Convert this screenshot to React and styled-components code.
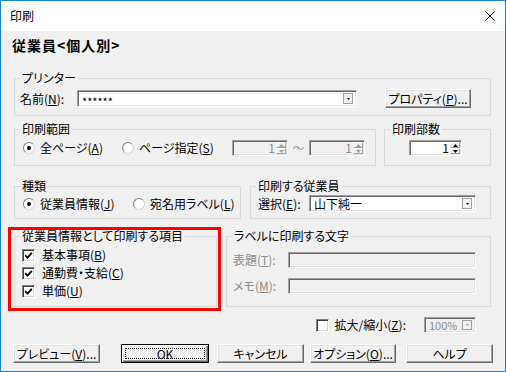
import React from 'react';
import styled, { createGlobalStyle } from 'styled-components';

const GlobalStyle = createGlobalStyle`
  html, body {
    margin: 0;
    padding: 0;
    background: #fff;
  }
  body {
    font-family: 'Noto Sans CJK JP', 'Noto Sans', sans-serif;
    font-size: 12px;
    color: #000;
  }
`;

const Window = styled.div`
  width: 506px;
  height: 372px;
  box-sizing: border-box;
  border: 1px solid #1883d7;
  background: #f0f0f0;
  display: flex;
  flex-direction: column;
  font-feature-settings: 'palt' 1;
  line-height: 14px;
`;

const TitleBar = styled.div`
  height: 30px;
  flex: none;
  background: #fff;
  display: flex;
  align-items: center;
  justify-content: space-between;
  padding: 0 10px 0 9px;
`;

const Main = styled.div`
  display: flex;
  flex-direction: column;
  padding: 0 14px 0 13px;
`;

const Heading = styled.div`
  margin: 5px 0 0 -2px;
  font-size: 14px;
  font-weight: bold;
  line-height: 18px;
  letter-spacing: 1px;
`;

const Row = styled.div`
  display: flex;
  align-items: flex-start;
  margin-top: ${p => p.$mt || 0}px;
  gap: ${p => p.$gap || 0}px;
`;

const Group = styled.fieldset`
  box-sizing: border-box;
  width: ${p => p.$w}px;
  min-width: 0;
  margin: ${p => p.$mt || 0}px 0 0;
  border: 1px solid #d9d9d9;
  padding: ${p => p.$pt}px 0 ${p => p.$pb}px 5px;
`;

const Legend = styled.legend`
  padding: 0 2px;
  font-size: 12px;
  line-height: 12px;
`;

const Line = styled.div`
  display: flex;
  align-items: center;
  height: ${p => p.$h}px;
  padding-left: ${p => p.$pl || 0}px;
  margin-top: ${p => p.$mt || 0}px;
`;

const Label = styled.span`
  flex: none;
  width: ${p => (p.$w ? `${p.$w}px` : 'auto')};
  color: ${p => (p.$dim ? '#8c8c8c' : '#000')};
  white-space: nowrap;
`;

const U = styled.span`
  text-decoration: underline;
  text-underline-offset: 1px;
`;

const Field = styled.div`
  box-sizing: border-box;
  flex: none;
  width: ${p => p.$w}px;
  height: ${p => p.$h}px;
  margin-left: ${p => p.$ml || 0}px;
  display: flex;
  align-items: center;
  padding-left: 4px;
  background: ${p => (p.$off ? '#f0f0f0' : '#fff')};
  color: ${p => (p.$off ? '#8c8c8c' : '#000')};
  border: 1px solid;
  border-color: #a0a0a0 #fff #fff #a0a0a0;
  box-shadow: inset 1px 1px 0 #696969, inset -1px -1px 0 #e3e3e3;
`;

const FieldText = styled.span`
  flex: 1;
  min-width: 0;
  line-height: 12px;
  font-size: ${p => p.$size || 12}px;
  padding-top: ${p => p.$shift || 0}px;
  text-align: ${p => (p.$right ? 'right' : 'left')};
  white-space: nowrap;
`;

const DropButton = styled.span`
  box-sizing: border-box;
  flex: none;
  width: 10px;
  height: ${p => p.$h}px;
  margin: 0 3px 0 2px;
  display: flex;
  align-items: center;
  justify-content: center;
  background: #f0f0f0;
  border: 1px solid #a0a0a0;
`;

const SpinButtons = styled.span`
  flex: none;
  width: 10px;
  height: 100%;
  margin-left: 1px;
  margin-right: 1px;
  display: flex;
  flex-direction: column;
  padding: 1px 0;
  box-sizing: border-box;
`;

const SpinHalf = styled.span`
  flex: 1;
  box-sizing: border-box;
  display: flex;
  align-items: center;
  justify-content: center;
  background: #f0f0f0;
  border: 1px solid;
  border-color: #fff #a0a0a0 #a0a0a0 #fff;
`;

const RadioItem = styled.label`
  display: flex;
  align-items: center;
  gap: 5px;
  flex: none;
  width: ${p => (p.$w ? `${p.$w}px` : 'auto')};
  white-space: nowrap;
`;

const RadioDot = styled.span`
  box-sizing: border-box;
  width: 12px;
  height: 12px;
  flex: none;
  border-radius: 50%;
  border: 1px solid;
  border-color: #808080 #d4d4d4 #d4d4d4 #808080;
  background: #fff;
  display: flex;
  align-items: center;
  justify-content: center;
  &::after {
    content: '';
    width: 4px;
    height: 4px;
    border-radius: 50%;
    background: ${p => (p.$on ? '#000' : 'transparent')};
  }
`;

const CheckItem = styled.label`
  display: flex;
  align-items: center;
  gap: ${p => p.$gap || 7}px;
  height: ${p => p.$h || 18}px;
  white-space: nowrap;
`;

const CheckBox = styled.span`
  box-sizing: border-box;
  width: 13px;
  height: 13px;
  flex: none;
  background: #fff;
  border: 1px solid;
  border-color: #808080 #fff #fff #808080;
  box-shadow: inset 1px 1px 0 #404040, inset -1px -1px 0 #d4d4d4;
  display: flex;
  align-items: center;
  justify-content: center;
`;

const Tilde = styled.span`
  flex: none;
  width: 21px;
  text-align: center;
  color: #a0a0a0;
`;

const RedFrame = styled.div`
  box-sizing: border-box;
  width: 213px;
  margin-left: -6px;
  border: 3px solid #ff0000;
  padding: 0 1px 1px 3px;
`;

const ZoomRow = styled.div`
  display: flex;
  align-items: center;
  justify-content: flex-end;
  height: 16px;
  margin-top: 6px;
  padding-right: 15px;
`;

const Button = styled.button`
  box-sizing: border-box;
  flex: none;
  width: ${p => p.$w}px;
  height: 19px;
  margin-left: ${p => p.$ml || 0}px;
  padding: ${p => (p.$default ? '3px' : '0')};
  display: flex;
  align-items: stretch;
  font: inherit;
  font-size: 12px;
  line-height: 13px;
  color: #000;
  background: #f0f0f0;
  border: 1px solid;
  border-color: ${p => (p.$default ? '#000' : '#fff #696969 #696969 #fff')};
  box-shadow: ${p =>
    p.$default
      ? 'inset 1px 1px 0 #fff, inset -1px -1px 0 #696969, inset -2px -2px 0 #a0a0a0'
      : 'inset -1px -1px 0 #a0a0a0, inset 1px 1px 0 #e3e3e3'};
`;

const ButtonFace = styled.span`
  flex: 1;
  display: flex;
  align-items: center;
  justify-content: center;
  border: ${p => (p.$focus ? '1px dotted #000' : '0')};
`;

const Arrow = ({ up, dim }) => (
  <svg width="5" height="3" viewBox="0 0 5 3">
    <path d={up ? 'M2.5 0L5 3H0Z' : 'M0 0H5L2.5 3Z'} fill={dim ? '#a0a0a0' : '#000'} />
  </svg>
);

const Combo = ({ w, h, ml, off, size, shift, children }) => (
  <Field $w={w} $h={h} $ml={ml} $off={off}>
    <FieldText $size={size} $shift={shift}>{children}</FieldText>
    <DropButton $h={h - 6}>
      <svg width="3" height="2" viewBox="0 0 3 2">
        <path d="M0 0H3L1.5 2Z" fill={off ? '#a0a0a0' : '#000'} />
      </svg>
    </DropButton>
  </Field>
);

const Spin = ({ w, off, value }) => (
  <Field $w={w} $h={16} $off={off}>
    <FieldText $right>{value}</FieldText>
    <SpinButtons>
      <SpinHalf><Arrow up dim={off} /></SpinHalf>
      <SpinHalf><Arrow dim={off} /></SpinHalf>
    </SpinButtons>
  </Field>
);

const Radio = ({ on, w, children }) => (
  <RadioItem $w={w}>
    <RadioDot $on={on} />
    <span>{children}</span>
  </RadioItem>
);

const Check = ({ on, h, gap, children }) => (
  <CheckItem $h={h} $gap={gap}>
    <CheckBox>
      {on && (
        <svg width="9" height="9" viewBox="0 0 9 9">
          <path d="M1.2 4.2L3.5 6.6L7.8 1.8" fill="none" stroke="#000" strokeWidth="1.8" />
        </svg>
      )}
    </CheckBox>
    <span>{children}</span>
  </CheckItem>
);

export default function App() {
  return (
    <Window>
      <GlobalStyle />
      <TitleBar>
        <span>印刷</span>
        <svg width="10" height="10" viewBox="0 0 10 10">
          <path d="M0.5 0.5L9.5 9.5M9.5 0.5L0.5 9.5" stroke="#000" strokeWidth="1" />
        </svg>
      </TitleBar>
      <Main>
        <Heading>従業員&lt;個人別&gt;</Heading>

        <Group $w={477} $mt={18} $pt={4} $pb={6}>
          <Legend>プリンター</Legend>
          <Line $h={21}>
            <Label $w={57}>名前(<U>N</U>):</Label>
            <Combo w={280} h={17} size={11} shift={4}>******</Combo>
            <Button $w={86} $ml={28}>
              <ButtonFace>プロパティ(<U>P</U>)...</ButtonFace>
            </Button>
          </Line>
        </Group>

        <Row $mt={7} $gap={8}>
          <Group $w={362} $pt={5} $pb={9}>
            <Legend>印刷範囲</Legend>
            <Line $h={16} $pl={3}>
              <Radio on w={99}>全ページ(<U>A</U>)</Radio>
              <Radio w={110}>ページ指定(<U>S</U>)</Radio>
              <Spin w={56} off value="1" />
              <Tilde>～</Tilde>
              <Spin w={56} off value="1" />
            </Line>
          </Group>
          <Group $w={107} $pt={5} $pb={9}>
            <Legend>印刷部数</Legend>
            <Line $h={16} $pl={19}>
              <Spin w={53} value="1" />
            </Line>
          </Group>
        </Row>

        <Row $mt={14} $gap={9}>
          <Group $w={227} $pt={4} $pb={7}>
            <Legend>種類</Legend>
            <Line $h={15} $pl={3}>
              <Radio on w={110}>従業員情報(<U>J</U>)</Radio>
              <Radio>宛名用ラベル(<U>L</U>)</Radio>
            </Line>
          </Group>
          <Group $w={241} $pt={3} $pb={6}>
            <Legend>印刷する従業員</Legend>
            <Line $h={17} $pl={2}>
              <Label $w={51}>選択(<U>E</U>):</Label>
              <Combo w={167} h={17}>山下純一</Combo>
            </Line>
          </Group>
        </Row>

        <Row $mt={8} $gap={5}>
          <RedFrame>
            <Group $w={203} $pt={4} $pb={6}>
              <Legend>従業員情報として印刷する項目</Legend>
              <Line $h={54} $pl={2}>
                <div>
                  <Check on>基本事項(<U>B</U>)</Check>
                  <Check on>通勤費・支給(<U>C</U>)</Check>
                  <Check on>単価(<U>U</U>)</Check>
                </div>
              </Line>
            </Group>
          </RedFrame>
          <Group $w={265} $mt={3} $pt={10} $pb={12}>
            <Legend>ラベルに印刷する文字</Legend>
            <Line $h={16} $pl={1}>
              <Label $w={55} $dim>表題(<U>T</U>):</Label>
              <Field $w={188} $h={16} $off />
            </Line>
            <Line $h={16} $pl={1} $mt={10}>
              <Label $w={55} $dim>メモ(<U>M</U>):</Label>
              <Field $w={188} $h={16} $off />
            </Line>
          </Group>
        </Row>

        <ZoomRow>
          <Check h={16} gap={6}>拡大/縮小(<U>Z</U>):</Check>
          <Combo w={52} h={16} ml={18} size={11} off>100%</Combo>
        </ZoomRow>

        <Row $mt={11}>
          <Button $w={87} $ml={-1}>
            <ButtonFace>プレビュー(<U>V</U>)...</ButtonFace>
          </Button>
          <Button $w={88} $ml={21} $default>
            <ButtonFace $focus>OK</ButtonFace>
          </Button>
          <Button $w={87} $ml={8}>
            <ButtonFace>キャンセル</ButtonFace>
          </Button>
          <Button $w={86} $ml={6}>
            <ButtonFace>オプション(<U>O</U>)...</ButtonFace>
          </Button>
          <Button $w={87} $ml={10}>
            <ButtonFace>ヘルプ</ButtonFace>
          </Button>
        </Row>
      </Main>
    </Window>
  );
}
